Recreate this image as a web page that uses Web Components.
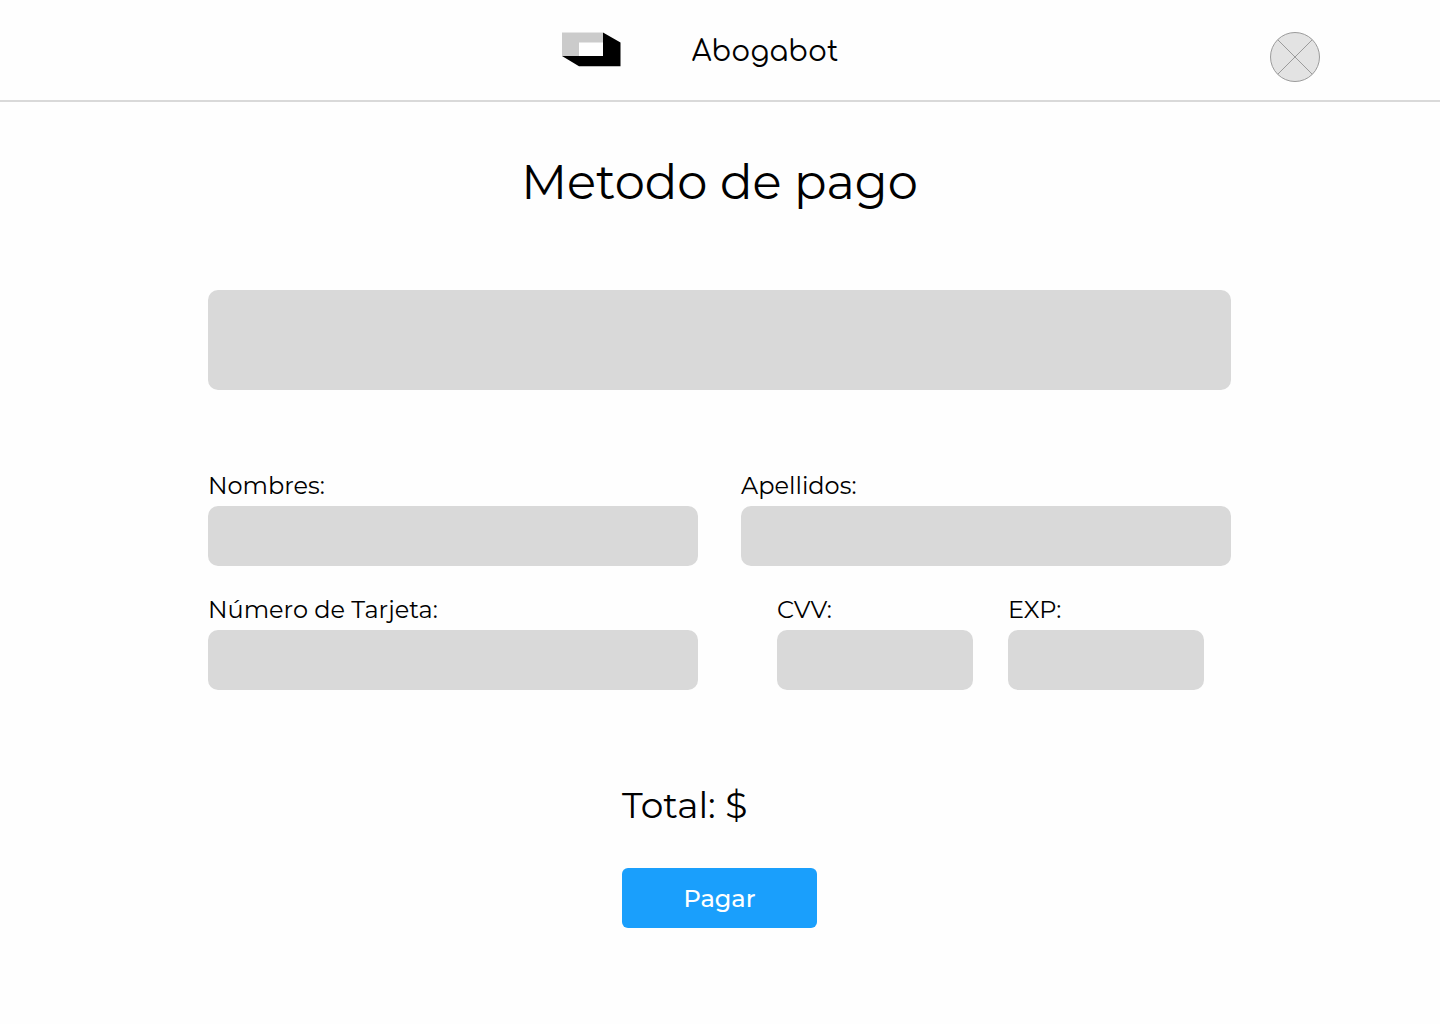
<!DOCTYPE html>
<html lang="es">
<head>
<meta charset="utf-8">
<meta name="viewport" content="width=device-width, initial-scale=1">
<title>Abogabot - Metodo de pago</title>
<style>
body { margin: 0; background: #fefefe; color: #000; font-family: Montserrat, Inter, "Open Sans", sans-serif; }
</style>
</head>
<body>
<payment-page></payment-page>

<template id="brand-logo">
<style>
:host { display: block; }
svg { display: block; }
</style>
<svg width="60" height="36" viewBox="0 0 60 36" aria-hidden="true">
  <path d="M0 0.500H41V11H17V24H0Z" fill="#cbcbcb"/>
  <path d="M17 10.500H41V24H17Z" fill="#fff"/>
  <path d="M41 0.500L58.500 10.500V34.200H17L0 24H41Z" fill="#000"/>
</svg>
</template>

<template id="user-avatar">
<style>
:host { display: block; }
a { display: block; }
svg { display: block; }
</style>
<a href="#" aria-label="Perfil">
<svg width="50" height="50" viewBox="0 0 50 50" fill="none" stroke="#9b9b9b">
  <circle cx="25" cy="25" r="24.500" fill="#e3e3e3"/>
  <path d="M7.700 7.700L42.300 42.300M42.300 7.700L7.700 42.300"/>
</svg>
</a>
</template>

<template id="app-header">
<style>
:host { display: block; border-bottom: 2px solid #d9d9d9; }
header { display: grid; grid-template-columns: 1fr auto 1fr; align-items: center; height: 100px; padding: 0 120px 0 80px; box-sizing: border-box; }
.brand { grid-column: 2; display: flex; align-items: center; gap: 70px; font: 28px/32px Comfortaa, Quicksand, Lato, sans-serif; }
.name { padding-top: 4px; }
user-avatar { justify-self: end; padding-top: 14px; }
</style>
<header>
  <div class="brand"><brand-logo></brand-logo><span class="name"><slot></slot></span></div>
  <user-avatar></user-avatar>
</header>
</template>

<template id="text-field">
<style>
:host { display: flex; flex-direction: column; gap: 5px; min-width: 0; }
label { font-size: 24px; line-height: 30px; }
input { width: 100%; height: 60px; box-sizing: border-box; border: 0; border-radius: 10px; padding: 0 16px; background: #d9d9d9; font: inherit; font-size: 24px; }
</style>
<label for="field"><slot></slot></label>
<input id="field" type="text">
</template>

<template id="pay-button">
<style>
:host { display: block; }
button { display: block; width: 100%; height: 60px; border: 0; border-radius: 6px; background: #1a9ffc; color: #fff; font: inherit; font-size: 24px; font-weight: 500; cursor: pointer; }
</style>
<button type="button"><slot></slot></button>
</template>

<template id="payment-form">
<style>
:host { display: block; }
form { display: flex; flex-direction: column; }
.summary { height: 100px; border-radius: 10px; background: #d9d9d9; margin-bottom: 81px; }
.fields { display: grid; grid-template-columns: 1fr 1fr; gap: 29px 43px; }
.card { display: grid; grid-template-columns: 1fr 1fr; gap: 35px; padding: 0 27px 0 36px; }
.checkout { align-self: center; width: 195px; margin-top: 93px; display: flex; flex-direction: column; gap: 41px; }
.total { margin: 0; font-size: 36px; line-height: 44px; }
</style>
<form>
  <div class="summary"></div>
  <div class="fields">
    <text-field>Nombres:</text-field>
    <text-field>Apellidos:</text-field>
    <text-field>Número de Tarjeta:</text-field>
    <div class="card">
      <text-field>CVV:</text-field>
      <text-field>EXP:</text-field>
    </div>
  </div>
  <div class="checkout">
    <p class="total">Total: $</p>
    <pay-button>Pagar</pay-button>
  </div>
</form>
</template>

<template id="payment-page">
<style>
:host { display: block; }
main { max-width: 1023px; margin: 0 auto; padding: 50px 25px 96px 24px; }
h1 { margin: 0 0 78px; text-align: center; font-size: 48px; line-height: 60px; font-weight: 400; }
</style>
<app-header>Abogabot</app-header>
<main>
  <h1>Metodo de pago</h1>
  <payment-form></payment-form>
</main>
</template>

<script>
class TemplateElement extends HTMLElement {
  constructor() {
    super();
    const template = document.getElementById(this.localName);
    this.attachShadow({ mode: "open" }).append(template.content.cloneNode(true));
  }
}
class BrandLogo extends TemplateElement {}
class UserAvatar extends TemplateElement {}
class AppHeader extends TemplateElement {}
class TextField extends TemplateElement {}
class PayButton extends TemplateElement {}
class PaymentForm extends TemplateElement {}
class PaymentPage extends TemplateElement {}
customElements.define("brand-logo", BrandLogo);
customElements.define("user-avatar", UserAvatar);
customElements.define("app-header", AppHeader);
customElements.define("text-field", TextField);
customElements.define("pay-button", PayButton);
customElements.define("payment-form", PaymentForm);
customElements.define("payment-page", PaymentPage);
</script>
</body>
</html>
